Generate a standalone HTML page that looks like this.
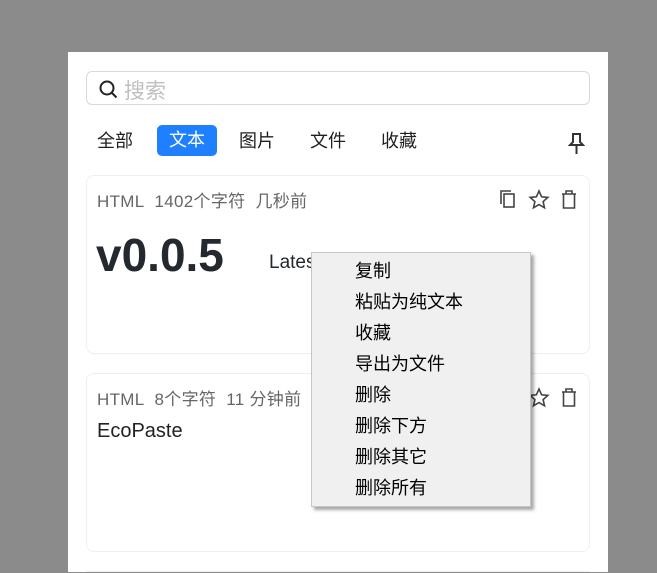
<!DOCTYPE html>
<html><head><meta charset="utf-8"><style>
*{margin:0;padding:0;box-sizing:border-box}
body{width:657px;height:572px;background:#8b8b8b;position:relative;overflow:hidden;font-family:"Liberation Sans","Noto Sans CJK SC",sans-serif}
.panel{position:absolute;left:68px;top:52px;width:540px;height:520px;background:#fff}
.search{position:absolute;left:18px;top:19px;width:504px;height:34px;border:1px solid #d9d9d9;border-radius:6px}
.search span{position:absolute;left:37px;top:3px;font-size:21px;color:#bfbfbf}
.tab{position:absolute;top:74px;height:31px;line-height:31px;font-size:18px;color:#1f1f1f;padding:0 11px}
.tab.a{top:73px;background:#1e80ff;color:#fff;border-radius:5px;padding:0 12px}
.card{position:absolute;left:18px;width:504px;height:179px;border:1px solid #efefef;border-radius:8px;overflow:hidden}
.meta{position:absolute;left:10px;top:11px;font-size:17px;color:#666;letter-spacing:0.3px}
.menu{position:absolute;left:311px;top:252px;width:220px;height:255px;background:#f0f0f0;border:1px solid #c6c6c6;box-shadow:3px 3px 3px rgba(0,0,0,.35)}
.menu div{position:absolute;left:43px;font-size:18px;color:#000}
</style></head><body>
<div class="panel">
<div class="search"><svg style="position:absolute;left:12px;top:8px" width="19" height="19" viewBox="0 0 19 19"><circle cx="8" cy="8" r="6.5" fill="none" stroke="#222" stroke-width="2"/><path d="M13 13l4.5 4.5" stroke="#222" stroke-width="2"/></svg><span>搜索</span></div>
<div class="tab" style="left:18px">全部</div>
<div class="tab a" style="left:89px">文本</div>
<div class="tab" style="left:160px">图片</div>
<div class="tab" style="left:231px">文件</div>
<div class="tab" style="left:302px">收藏</div>
<svg style="position:absolute;left:500px;top:80px" width="17" height="24" viewBox="0 0 17 24"><path d="M4 2h9M5 2v8l-3 3h13l-3-3V2M8.5 13v9" fill="none" stroke="#333" stroke-width="2"/></svg>
<div class="card" style="top:123px">
<div class="meta">HTML&nbsp; 1402个字符&nbsp; 几秒前</div>
<svg style="position:absolute;left:412px;top:13px" width="80" height="22" viewBox="0 0 80 22"><rect x="5" y="5" width="10" height="13" fill="none" stroke="#444" stroke-width="1.6"/><path d="M2 15V2h10" fill="none" stroke="#444" stroke-width="1.6"/><path d="M40 2l2.6 5.8 6.2.6-4.7 4.2 1.4 6.2-5.5-3.2-5.5 3.2 1.4-6.2-4.7-4.2 6.2-.6z" fill="none" stroke="#444" stroke-width="1.6"/><path d="M63 5h14M67 5V2h6v3M64.5 5v14h11V5" fill="none" stroke="#444" stroke-width="1.6"/></svg>
<div style="position:absolute;left:9px;top:52px;font-size:46px;font-weight:bold;color:#24292f">v0.0.5</div>
<div style="position:absolute;left:182px;top:76px;font-size:19px;color:#24292f">Latest</div>
</div>
<div class="card" style="top:321px">
<div class="meta">HTML&nbsp; 8个字符&nbsp; 11 分钟前</div>
<svg style="position:absolute;left:412px;top:13px" width="80" height="22" viewBox="0 0 80 22"><path d="M40 2l2.6 5.8 6.2.6-4.7 4.2 1.4 6.2-5.5-3.2-5.5 3.2 1.4-6.2-4.7-4.2 6.2-.6z" fill="none" stroke="#444" stroke-width="1.6"/><path d="M63 5h14M67 5V2h6v3M64.5 5v14h11V5" fill="none" stroke="#444" stroke-width="1.6"/></svg>
<div style="position:absolute;left:10px;top:46px;font-size:20px;color:#222">EcoPaste</div>
</div>
<div style="position:absolute;left:18px;top:519px;width:504px;height:2px;border-top:1px solid #efefef"></div>
</div>
<div class="menu">
<div style="top:4px">复制</div><div style="top:35px">粘贴为纯文本</div><div style="top:66px">收藏</div><div style="top:97px">导出为文件</div><div style="top:128px">删除</div><div style="top:159px">删除下方</div><div style="top:190px">删除其它</div><div style="top:221px">删除所有</div>
</div>
</body></html>
